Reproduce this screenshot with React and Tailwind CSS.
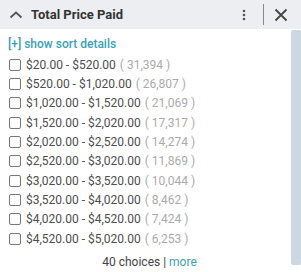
import React from "react";

const rows = [
  ["$20.00 - $520.00", "31,394"],
  ["$520.00 - $1,020.00", "26,807"],
  ["$1,020.00 - $1,520.00", "21,069"],
  ["$1,520.00 - $2,020.00", "17,317"],
  ["$2,020.00 - $2,520.00", "14,274"],
  ["$2,520.00 - $3,020.00", "11,869"],
  ["$3,020.00 - $3,520.00", "10,044"],
  ["$3,520.00 - $4,020.00", "8,462"],
  ["$4,020.00 - $4,520.00", "7,424"],
  ["$4,520.00 - $5,020.00", "6,253"],
];

export default function App() {
  return (
    <div className="w-[301px] h-[272px] bg-white overflow-hidden" style={{ fontFamily: "Roboto, 'Liberation Sans', sans-serif" }}>
      <div className="h-[29px] bg-[#eceef1] flex items-center pl-[9px] pr-[13px]">
        <svg width="14" height="10" viewBox="0 0 14 10" className="mr-[8px]">
          <path d="M1.5 7.5 L7 2.5 L12.5 7.5" fill="none" stroke="#555" strokeWidth="1.8" />
        </svg>
        <span className="text-[13px] font-bold text-[#333] flex-1">Total Price Paid</span>
        <svg width="4" height="12" viewBox="0 0 4 12" className="mr-[17px]">
          <circle cx="2" cy="2" r="1.3" fill="#555" />
          <circle cx="2" cy="6" r="1.3" fill="#555" />
          <circle cx="2" cy="10" r="1.3" fill="#555" />
        </svg>
        <div className="w-px h-[21px] bg-[#888] mr-[10px]" />
        <svg width="14" height="14" viewBox="0 0 14 14">
          <path d="M1.5 1.5 L12.5 12.5 M12.5 1.5 L1.5 12.5" stroke="#444" strokeWidth="1.8" />
        </svg>
      </div>
      <div className="flex h-[243px]">
        <div className="flex-1 pl-[8px] pt-[5px]">
          <div className="text-[12px] text-[#3aa0b5] font-medium h-[20px] flex items-center">[+] show sort details</div>
          <div className="pt-[1px]">
            {rows.map(([r, c]) => (
              <div key={r} className="h-[19.35px] flex items-center text-[12px]">
                <span className="w-[12px] h-[12px] border border-[#777] rounded-[2px] mr-[5px] ml-[1px]" />
                <span className="text-[#4d4d4d]">{r}</span>
                <span className="text-[#aaa] ml-[4px]">( {c} )</span>
              </div>
            ))}
          </div>
          <div className="text-center text-[12px] text-[#444] pt-[5px]">
            40 choices | <span className="text-[#3aa0b5]">more</span>
          </div>
        </div>
        <div className="w-[10px] mt-[1px] mb-[7px] bg-[#cdd7e1] rounded-[2px]" />
      </div>
    </div>
  );
}
